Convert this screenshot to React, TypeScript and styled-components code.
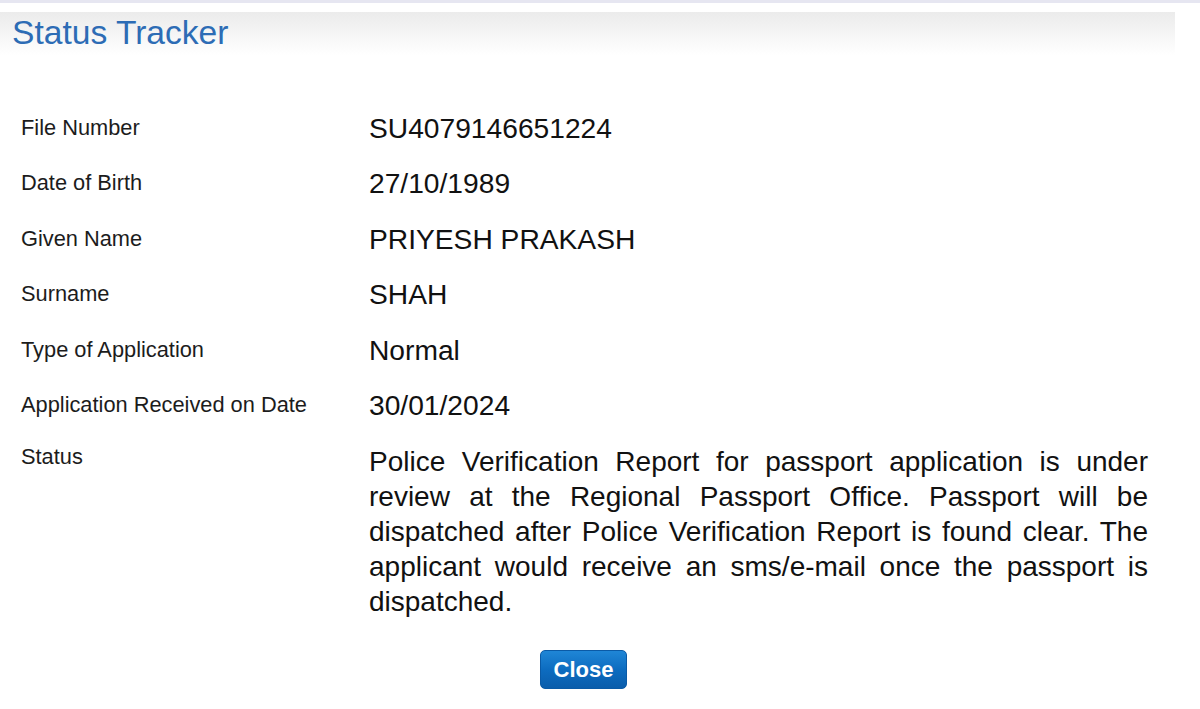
import React from 'react';
import styled, {createGlobalStyle} from "styled-components";

const GlobalStyle = createGlobalStyle`
    html, body {
        margin: 0;
        padding: 0;
        background: #fff;
    }
    body {
        font-family: "Liberation Sans", Arial, sans-serif;
        color: #111;
    }
`

const details = [
    {label: "File Number", value: "SU4079146651224"},
    {label: "Date of Birth", value: "27/10/1989"},
    {label: "Given Name", value: "PRIYESH PRAKASH"},
    {label: "Surname", value: "SHAH"},
    {label: "Type of Application", value: "Normal"},
    {label: "Application Received on Date", value: "30/01/2024"},
]

const statusText = "Police Verification Report for passport application is under review at the Regional Passport Office. Passport will be dispatched after Police Verification Report is found clear. The applicant would receive an sms/e-mail once the passport is dispatched."

export default function App() {
    return (
        <>
            <GlobalStyle/>
            <Page>
                <TopLine/>
                <Header>
                    <Title>Status Tracker</Title>
                </Header>
                <Details>
                    {details.map((item) => (
                        <Row key={item.label}>
                            <Label>{item.label}</Label>
                            <Value>{item.value}</Value>
                        </Row>
                    ))}
                    <StatusRow>
                        <Label $top>Status</Label>
                        <StatusText>{statusText}</StatusText>
                    </StatusRow>
                </Details>
                <Actions>
                    <CloseButton type="button">Close</CloseButton>
                </Actions>
            </Page>
        </>
    );
}

const Page = styled.div`
    width: 1200px;
    height: 709px;
    overflow: hidden;
    background: #fff;
`

const TopLine = styled.div`
    height: 3px;
    background: #e6e6f1;
    margin-bottom: 9px;
`

const Header = styled.div`
    width: 1175px;
    height: 43px;
    background: linear-gradient(to bottom, #ebebeb 0%, #f6f6f6 55%, #ffffff 100%);
    display: flex;
    align-items: flex-start;
`

const Title = styled.h1`
    margin: 0;
    padding-left: 12px;
    font-family: "Liberation Sans", Arial, sans-serif;
    font-weight: 400;
    font-size: 33.6px;
    line-height: 42px;
    color: #2d6cb5;
`

const Details = styled.div`
    display: flex;
    flex-direction: column;
    padding-top: 45px;
`

const Row = styled.div`
    display: grid;
    grid-template-columns: 348px 1fr;
    align-items: center;
    height: 55.5px;
    padding-left: 21px;
`

const StatusRow = styled.div`
    display: grid;
    grid-template-columns: 348px 779px;
    align-items: start;
    padding-left: 21px;
`

const Label = styled.div<{ $top?: boolean }>`
    font-size: 21.8px;
    line-height: ${(p) => (p.$top ? "35px" : "28px")};
    margin-top: ${(p) => (p.$top ? "6px" : "0")};
    color: #1c1c1c;
`

const Value = styled.div`
    font-size: 28.2px;
    line-height: 32px;
    color: #111;
`

const StatusText = styled.p`
    margin: 11px 0 0;
    font-size: 28px;
    line-height: 35px;
    text-align: justify;
    color: #111;
`

const Actions = styled.div`
    width: 1167px;
    display: flex;
    justify-content: center;
    padding-top: 31px;
`

const CloseButton = styled.button`
    width: 87px;
    height: 39px;
    border: 1px solid #0a5aa6;
    border-radius: 5px;
    background: linear-gradient(to bottom, #1f86d6 0%, #0d6cc0 50%, #0a5dab 100%);
    color: #fff;
    font-family: "Liberation Sans", Arial, sans-serif;
    font-weight: 700;
    font-size: 22px;
    padding: 0;
    cursor: pointer;
`
